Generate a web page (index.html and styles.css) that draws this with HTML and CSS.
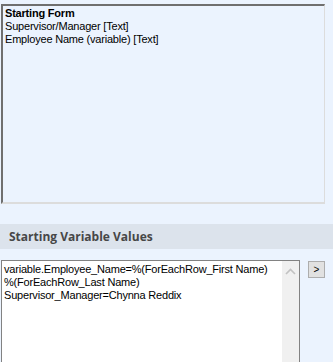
FILE: index.html
```html
<!DOCTYPE html>
<html lang="en">

<head>
    <meta charset="UTF-8">
    <meta name="viewport" content="width=device-width, initial-scale=1.0">
    <title>Starting Form</title>
    <link rel="stylesheet" href="styles.css">
</head>

<body>

    <div class="form-box">
        <strong>Starting Form</strong>
        <p>Supervisor/Manager [Text]</p>
        <p>Employee Name (variable) [Text]</p>
    </div>

    <div class="section-head">Starting Variable Values</div>

    <div class="values">
        <div class="values-box">
            <div class="values-text">
                <p>variable.Employee_Name=%(ForEachRow_First Name)</p>
                <p>%(ForEachRow_Last Name)</p>
                <p>Supervisor_Manager=Chynna Reddix</p>
            </div>
            <div class="scrollbar">
                <svg width="11" height="7" viewBox="0 0 11 7"><path d="M1 6 L5.5 1.5 L10 6" fill="none" stroke="#c2c2c2" stroke-width="1.6"/></svg>
            </div>
        </div>
        <button class="more">&gt;</button>
    </div>

</body>

</html>
```

FILE: styles.css
```css
* {
    margin: 0;
    padding: 0;
}

body {
    background-color: #ebf3fe;
    height: 362px;
    overflow: hidden;
    font-family: "Liberation Sans", Arial, sans-serif;
    font-size: 11px;
    letter-spacing: -0.2px;
    color: #000;
}

.form-box {
    margin: 4px 8px 0 1px;
    height: 200px;
    box-sizing: border-box;
    border-top: 2px solid #6f6f6f;
    border-left: 2px solid #6f6f6f;
    border-right: 1px solid #dcdcdc;
    border-bottom: 2px solid #dcdcdc;
    padding: 1px 2px;
    line-height: 13px;
    white-space: nowrap;
}

.form-box strong {
    display: block;
}

.section-head {
    margin-top: 20px;
    height: 25px;
    line-height: 25px;
    background-color: #dce3ec;
    padding-left: 9px;
    font-family: "Open Sans", sans-serif;
    font-weight: bold;
    font-size: 12px;
    letter-spacing: 0;
    color: #474747;
}

.values {
    display: flex;
    margin-top: 11px;
}

.values-box {
    margin-left: 1px;
    width: 299px;
    height: 120px;
    box-sizing: border-box;
    border: 1px solid #828282;
    border-bottom: none;
    background-color: #fff;
    display: flex;
}

.values-text {
    flex: 1;
    padding: 2px 2px;
    line-height: 13px;
    white-space: nowrap;
    overflow: hidden;
}

.scrollbar {
    width: 17px;
    background-color: #f0f0f0;
    display: flex;
    justify-content: center;
    padding-top: 7px;
    box-sizing: border-box;
}

.scrollbar svg {
    display: block;
}

.more {
    margin-left: 8px;
    margin-top: 1px;
    width: 17px;
    height: 17px;
    background-color: #e1e1e1;
    border: 1px solid #adadad;
    font-family: "Liberation Sans", Arial, sans-serif;
    font-size: 10px;
    line-height: 14px;
    color: #000;
}
```
